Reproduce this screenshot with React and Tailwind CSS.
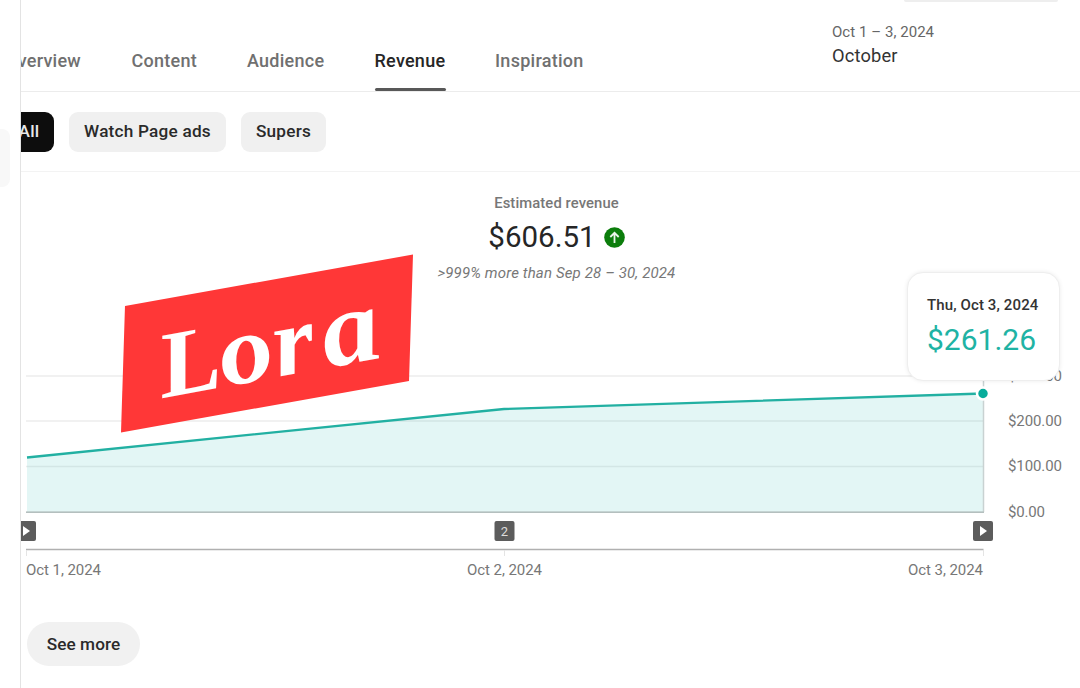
import clsx from 'clsx';

const tabs = [
  { label: 'Overview', width: 'w-[77px]' },
  { label: 'Content', width: 'w-[66px]' },
  { label: 'Audience', width: 'w-[78px]' },
  { label: 'Revenue', width: 'w-[71px]', active: true },
  { label: 'Inspiration', width: 'w-[89px]' },
];

const filters = [
  { label: 'All', width: 'w-[50px]', active: true },
  { label: 'Watch Page ads', width: 'w-[157px]' },
  { label: 'Supers', width: 'w-[85px]' },
];

const yAxis = [
  { label: '$300.00', y: 376 },
  { label: '$200.00', y: 421 },
  { label: '$100.00', y: 466.5 },
  { label: '$0.00', y: 512 },
];

const xAxis = [
  { label: 'Oct 1, 2024', x: 26 },
  { label: 'Oct 2, 2024', x: 467 },
  { label: 'Oct 3, 2024', x: 908 },
];

function Header() {
  return (
    <header className="flex h-[92px] justify-between border-b border-[#ececec]">
      <nav className="flex items-end gap-[49.5px] -ml-[16px]">
        {tabs.map((tab) => (
          <div
            key={tab.label}
            className={clsx(
              'flex h-11 flex-col justify-between whitespace-nowrap text-[18px] leading-7 font-medium tracking-[0.26px]',
              tab.width,
              tab.active ? 'text-[#262626]' : 'text-[#707070]'
            )}
          >
            <span>{tab.label}</span>
            {tab.active && <span className="h-[3px] w-[71px] rounded-sm bg-[#585858]" />}
          </div>
        ))}
      </nav>

      <div className="w-[248px]">
        <div className="ml-[72px] h-0.5 w-[154px] rounded-b-full bg-[#eeeeee]" />
        <p className="mt-5 text-[15px] leading-5 tracking-[0.05px] text-[#666]">Oct 1 – 3, 2024</p>
        <p className="text-[18.3px] leading-7 tracking-[0.15px] text-[#333]">October</p>
      </div>
    </header>
  );
}

function Filters() {
  return (
    <div className="flex h-20 items-center gap-[15px] border-b border-[#f3f3f3] -ml-[17px]">
      {filters.map((filter) => (
        <button
          key={filter.label}
          className={clsx(
            'h-10 rounded-[9px] text-[17.2px] font-medium tracking-[0.22px] whitespace-nowrap',
            filter.width,
            filter.active ? 'bg-[#0d0d0d] text-[#e8e8e8]' : 'bg-[#f0f0f0] text-[#2a2a2a]'
          )}
        >
          {filter.label}
        </button>
      ))}
    </div>
  );
}

function Summary() {
  return (
    <div className="flex h-[188px] flex-col items-center pl-[12px] pt-[21px]">
      <p className="text-[14.8px] leading-5 font-medium tracking-[0.1px] text-[#777]">Estimated revenue</p>
      <div className="mt-1 flex items-center gap-2">
        <span className="text-[29.5px] leading-10 text-[#262626]">$606.51</span>
        <svg width="21" height="21" viewBox="0 0 21 21">
          <circle cx="10.5" cy="10.5" r="10.3" fill="#0b7d0b" />
          <path d="M10.5 16V6M6.3 10l4.2-4.2L14.7 10" fill="none" stroke="#e9f4e9" strokeWidth="1.8" />
        </svg>
      </div>
      <p className="mt-1.5 text-[15px] leading-5 italic tracking-[0.14px] text-[#777]">
        &gt;999% more than Sep 28 – 30, 2024
      </p>
    </div>
  );
}

function VideoMarker({ x }) {
  return (
    <g>
      <rect x={x} y="521" width="20" height="20" rx="2" fill="#5c5c5c" />
      <path d={`M${x + 7} 526v10l7-5z`} fill="#fff" />
    </g>
  );
}

function Chart() {
  return (
    <svg className="block font-['Roboto',sans-serif]" width="1059" height="230" viewBox="21 360 1059 230">
      {yAxis.map((tick) => (
        <g key={tick.label}>
          <path d={`M26 ${tick.y}H983`} stroke="#ededed" strokeWidth="1.5" />
          <text x="1008" y={tick.y + 4.9} fontSize="15" textLength={tick.label === '$0.00' ? 37 : 54} fill="#777">
            {tick.label}
          </text>
        </g>
      ))}
      <path d="M27 457.5L504 409L983 393.5V512H27Z" fill="#00a9a4" fillOpacity="0.11" />
      <path d="M983.5 376V512" stroke="#c9d2d2" strokeWidth="1.5" />
      <path d="M26 512.3H984" stroke="#b4bfbe" strokeWidth="1.6" />
      <path d="M27 457.5L504 409L983 393.5" fill="none" stroke="#22b0a2" strokeWidth="2.3" />
      <circle cx="983" cy="393.5" r="6" fill="#08ac9b" stroke="#fff" strokeWidth="2.5" />

      <VideoMarker x={16} />
      <rect x="494.5" y="521" width="20" height="20" rx="2" fill="#5c5c5c" />
      <text x="504.5" y="535.7" fontSize="13" textAnchor="middle" fill="#ddd">2</text>
      <VideoMarker x={973} />

      <path d="M26 549.5H983.5" stroke="#b0b0b0" strokeWidth="1.6" />
      <path d="M26.5 550v6M504.5 550v6M983.5 550v6" stroke="#e4e4e4" />
      {xAxis.map((tick) => (
        <text key={tick.label} x={tick.x} y="575" fontSize="15" textLength="75" fill="#777">
          {tick.label}
        </text>
      ))}
    </svg>
  );
}

function Tooltip() {
  return (
    <div className="absolute left-[886px] top-[272px] h-[109px] w-[153px] rounded-2xl border border-[#eee] bg-white pl-[19px] pt-[22px] shadow-[0_0_4px_rgba(0,0,0,0.08)]">
      <p className="text-[15px] leading-5 font-medium tracking-[0.12px] text-[#333] whitespace-nowrap">
        Thu, Oct 3, 2024
      </p>
      <p className="mt-[5px] text-[30px] leading-10 text-[#1fb3a4]">$261.26</p>
    </div>
  );
}

function NameTag() {
  return (
    <svg className="absolute left-[99px] top-[253px]" width="294" height="181" viewBox="120 253 294 181">
      <path d="M125 306L413 254.5L409 381L121 432.5Z" fill="#ff3737" />
      <text
        transform="matrix(1.08 -0.199 0.19 0.98 163 398)"
        fontSize="98"
        fontWeight="700"
        fontStyle="italic"
        fill="#fff"
        className="font-['Liberation_Serif',serif]"
      >
        <tspan x="0" fontSize="94">L</tspan>
        <tspan x="57 107">or</tspan>
        <tspan x="152" fontSize="106">a</tspan>
      </text>
    </svg>
  );
}

export default function App() {
  return (
    <div className="flex h-[688px] w-[1080px] overflow-hidden bg-white font-['Roboto',sans-serif]">
      <aside className="w-[21px] shrink-0 border-r border-[#e3e3e3] pt-[129px]">
        <div className="h-[58px] w-[10px] rounded-r-lg bg-[#f8f8f8]" />
      </aside>

      <main className="relative w-[1059px] overflow-hidden">
        <Header />
        <Filters />
        <Summary />
        <Chart />
        <button className="ml-1.5 mt-8 h-11 w-[113px] rounded-full bg-[#f1f1f1] pt-0.5 text-[17.2px] font-medium tracking-[0.1px] text-[#2a2a2a]">
          See more
        </button>
        <NameTag />
        <Tooltip />
      </main>
    </div>
  );
}
